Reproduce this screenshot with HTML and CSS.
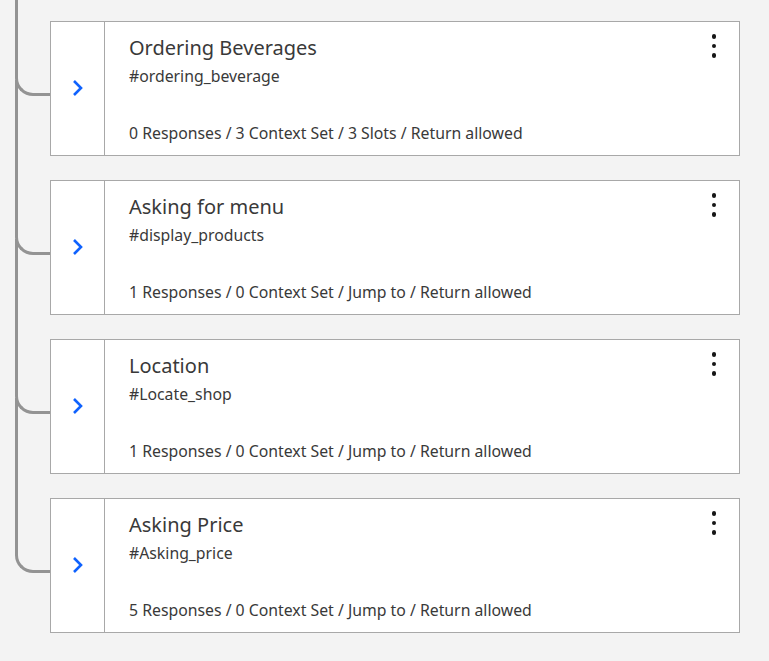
FILE: index.html
```html
<!DOCTYPE html>
<html>
<head>
<meta charset="utf-8">
<link rel="stylesheet" href="styles.css">
</head>
<body>
<div class="tree">
  <div class="node">
    <div class="toggle"><svg width="14" height="18" viewBox="0 0 14 18"><path d="M3 2 L10 9 L3 16" fill="none" stroke="#0f62fe" stroke-width="2.6"/></svg></div>
    <div class="body">
      <div class="title">Ordering Beverages</div>
      <div class="intent">#ordering_beverage</div>
      <div class="meta">0 Responses / 3 Context Set / 3 Slots / Return allowed</div>
    </div>
    <div class="menu"><span></span><span></span><span></span></div>
  </div>
  <div class="node">
    <div class="toggle"><svg width="14" height="18" viewBox="0 0 14 18"><path d="M3 2 L10 9 L3 16" fill="none" stroke="#0f62fe" stroke-width="2.6"/></svg></div>
    <div class="body">
      <div class="title">Asking for menu</div>
      <div class="intent">#display_products</div>
      <div class="meta">1 Responses / 0 Context Set / Jump to / Return allowed</div>
    </div>
    <div class="menu"><span></span><span></span><span></span></div>
  </div>
  <div class="node">
    <div class="toggle"><svg width="14" height="18" viewBox="0 0 14 18"><path d="M3 2 L10 9 L3 16" fill="none" stroke="#0f62fe" stroke-width="2.6"/></svg></div>
    <div class="body">
      <div class="title">Location</div>
      <div class="intent">#Locate_shop</div>
      <div class="meta">1 Responses / 0 Context Set / Jump to / Return allowed</div>
    </div>
    <div class="menu"><span></span><span></span><span></span></div>
  </div>
  <div class="node">
    <div class="toggle"><svg width="14" height="18" viewBox="0 0 14 18"><path d="M3 2 L10 9 L3 16" fill="none" stroke="#0f62fe" stroke-width="2.6"/></svg></div>
    <div class="body">
      <div class="title">Asking Price</div>
      <div class="intent">#Asking_price</div>
      <div class="meta">5 Responses / 0 Context Set / Jump to / Return allowed</div>
    </div>
    <div class="menu"><span></span><span></span><span></span></div>
  </div>
</div>
</body>
</html>
```

FILE: styles.css
```css
html, body {
  margin: 0;
  padding: 0;
  background: #f3f3f3;
  overflow: hidden;
}
body {
  font-family: "Noto Sans", "Open Sans", sans-serif;
  color: #393939;
}
.tree {
  display: flex;
  flex-direction: column;
  gap: 24px;
  padding: 21px 29px 0 50px;
}
.node {
  position: relative;
  display: flex;
  height: 135px;
  box-sizing: border-box;
  background: #fff;
  border: 1px solid #a8a8a8;
}
.node::before {
  content: "";
  position: absolute;
  left: -36px;
  top: -101px;
  width: 32px;
  height: 172px;
  border-left: 3px solid #939393;
  border-bottom: 3px solid #939393;
  border-bottom-left-radius: 18px;
}
.toggle {
  width: 53px;
  flex: none;
  border-right: 1px solid #a8a8a8;
  display: flex;
  align-items: center;
  justify-content: center;
}
.toggle svg {
  margin-top: -2px;
}
.body {
  flex: 1;
  display: flex;
  flex-direction: column;
  padding: 13px 24px 0 24px;
}
.title {
  font-size: 20px;
  line-height: 26px;
}
.intent {
  font-size: 15.8px;
  line-height: 20px;
  margin-top: 5px;
}
.meta {
  font-size: 15.8px;
  line-height: 20px;
  margin-top: 37px;
}
.menu {
  position: absolute;
  right: 23px;
  top: 12px;
  display: flex;
  flex-direction: column;
  gap: 5px;
}
.menu span {
  width: 4.5px;
  height: 4.5px;
  border-radius: 50%;
  background: #161616;
}
```
